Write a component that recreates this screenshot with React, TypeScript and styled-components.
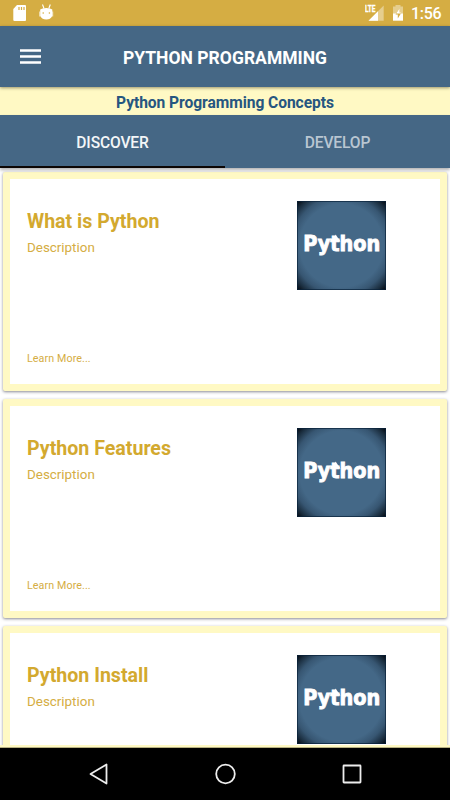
import React from 'react';
import styled, { createGlobalStyle } from 'styled-components';

const blue = '#456785';
const gold = '#d5ad43';
const cream = '#fff9c4';

const GlobalStyle = createGlobalStyle`
  * { box-sizing: border-box; }
  body { margin: 0; background: #fff; font-family: Roboto, sans-serif; }
`;

const Screen = styled.div`
  width: 450px;
  height: 800px;
  display: flex;
  flex-direction: column;
  overflow: hidden;
  background: #fff;
`;

const StatusBar = styled.div`
  flex: none;
  height: 26px;
  display: flex;
  justify-content: space-between;
  background: ${gold};
`;

const StatusIcons = styled.svg`
  display: block;
  height: 26px;
`;

const StatusRight = styled.div`
  display: flex;
`;

const Clock = styled.span`
  width: 39px;
  font-size: 16px;
  font-weight: 500;
  line-height: 28px;
  letter-spacing: -0.3px;
  color: #fff;
`;

const AppBar = styled.header`
  flex: none;
  position: relative;
  z-index: 1;
  height: 61px;
  display: grid;
  grid-template-columns: 60px 1fr 60px;
  align-items: center;
  background: ${blue};
  box-shadow: 0 1px 3px rgba(60, 50, 20, 0.5);
`;

const MenuButton = styled.button`
  border: 0;
  padding: 0 0 0 20px;
  background: none;
  svg { display: block; }
`;

const Title = styled.h1`
  margin: 2px 0 0;
  text-align: center;
  color: #fff;
  font-size: 17.5px;
  font-weight: 700;
  line-height: 24px;
  letter-spacing: 0.02px;
  white-space: nowrap;
`;

const Banner = styled.div`
  flex: none;
  height: 28px;
  padding-top: 1px;
  background: ${cream};
  color: #265680;
  font-size: 15.6px;
  font-weight: 700;
  line-height: 30px;
  letter-spacing: -0.06px;
  text-align: center;
`;

const Tabs = styled.nav`
  flex: none;
  position: relative;
  z-index: 1;
  height: 53px;
  display: grid;
  grid-template-columns: 1fr 1fr;
  background: ${blue};
  box-shadow: 0 2px 3px rgba(0, 0, 0, 0.3);
`;

const Tab = styled.button<{ $active?: boolean }>`
  border: 0;
  border-bottom: 2px solid ${p => (p.$active ? '#0c0604' : 'transparent')};
  padding: 5px 0 0;
  background: none;
  color: ${p => (p.$active ? '#f3f6f8' : '#b9c6d2')};
  font-family: inherit;
  font-size: 15.6px;
  font-weight: 500;
  letter-spacing: -0.15px;
`;

const List = styled.main`
  flex: 1;
  min-height: 0;
  overflow: hidden;
  display: flex;
  flex-direction: column;
  gap: 8px;
  padding: 4px 3px 0;
`;

const Card = styled.article`
  flex: none;
  height: 219px;
  display: flex;
  justify-content: space-between;
  border: 7px solid ${cream};
  border-radius: 2px;
  background: #fff;
  box-shadow: 0 1px 3px rgba(40, 40, 60, 0.55);
`;

const CardText = styled.div`
  display: flex;
  flex-direction: column;
  padding: 29px 0 17px 17px;
  color: ${gold};
`;

const CardTitle = styled.h2`
  margin: 0;
  color: #d3a92f;
  font-size: 19.6px;
  font-weight: 700;
  line-height: 28px;
`;

const Description = styled.p`
  margin: 2px 0 0;
  font-size: 13.4px;
  line-height: 20px;
`;

const LearnMore = styled.a`
  margin-top: auto;
  font-size: 10.7px;
  line-height: 16px;
  letter-spacing: 0.1px;
`;

const Logo = styled.svg`
  display: block;
  width: 89px;
  height: 89px;
  margin: 22px 54px 0 0;
`;

const BottomEdge = styled.div`
  flex: none;
  height: 3px;
  background: ${cream};
  border-bottom: 1px solid #b7b083;
`;

const NavBar = styled.footer`
  flex: none;
  height: 52px;
  display: flex;
  justify-content: center;
  background: #000;
`;

const NavIcon = styled.svg`
  display: block;
  width: 127px;
  height: 52px;
  fill: none;
  stroke: #ededed;
  stroke-width: 1.8;
  stroke-linejoin: round;
`;

function PythonLogo({ id }: { id: string }) {
  return (
    <Logo viewBox="0 0 89 89">
      <defs>
        <radialGradient id={id} cx="50%" cy="50%" r="71%">
          <stop offset="0.66" stopColor="#446887" />
          <stop offset="0.78" stopColor="#375672" />
          <stop offset="0.9" stopColor="#1a2d3e" />
          <stop offset="1" stopColor="#000208" />
        </radialGradient>
      </defs>
      <rect width="89" height="89" fill={`url(#${id})`} />
      <rect x="0.5" y="0.5" width="88" height="88" fill="none" stroke="#08223a" strokeOpacity="0.7" />
      <text
        x="6.200"
        y="50"
        textLength="77"
        lengthAdjust="spacingAndGlyphs"
        fontFamily="DejaVu Sans, sans-serif"
        fontWeight="700"
        fontSize="20.500"
        fill="#fff"
        stroke="#fff"
        strokeWidth="0.900"
        strokeLinejoin="miter"
      >
        Python
      </text>
      <path d="M37.500 37.500l1-4 5 7h-6z" fill="#fff" />
    </Logo>
  );
}

const topics = ['What is Python', 'Python Features', 'Python Install'];

export default function App() {
  return (
    <>
      <GlobalStyle />
      <Screen>
        <StatusBar>
          <StatusIcons width="60" viewBox="0 0 60 26" fill="#fff">
            <path d="M17 5h8q1 0 1 1v14q0 1-1 1H14.500q-1.200 0-1.200-1V9z" />
            <path d="M19 7v3M21.500 7v3M24 7v3" stroke={gold} strokeWidth="1.200" />
            <path d="M42.500 4.500l1.500 4M50.300 4.500l-1.500 4" stroke="#fff" strokeWidth="1.100" />
            <path d="M40.200 9.500Q42 8 46.300 8t6 1.500v6.500Q50.500 19.500 46.300 19.500T40.200 16z" />
            <path d="M39.700 11.500v5M52.700 11.500v5" stroke="#fff" strokeOpacity="0.7" />
            <circle cx="43.200" cy="13" r="0.800" fill={gold} />
            <circle cx="49.400" cy="13" r="0.800" fill={gold} />
          </StatusIcons>
          <StatusRight>
            <StatusIcons width="46" viewBox="365 0 46 26">
              <path d="M383.700 5.500V20.700H368.500z" fill="#fff" fillOpacity="0.4" />
              <path d="M378 11.200V20.700H368.500z" fill="#fff" />
              <path d="M364 4h12v8h-12z" fill={gold} />
              <text x="365" y="12" fontFamily="Roboto" fontSize="8.800" fontWeight="700" fill="#fff" stroke="#fff" strokeWidth="0.350" textLength="10.500" lengthAdjust="spacingAndGlyphs">LTE</text>
              <path d="M393 6.500h2.500V5h5v1.500h2.500V14h-10z" fill="#fff" fillOpacity="0.4" />
              <path d="M393 13.500h10V20.700h-10z" fill="#fff" />
              <path d="M399.500 8.500l-4 6h2.300v4l3.700-6h-2z" fill={gold} />
              <path d="M399.500 8.500l-3.300 5h4.500l.8-1h-2z" fill="#fff" />
            </StatusIcons>
            <Clock>1:56</Clock>
          </StatusRight>
        </StatusBar>
        <AppBar>
          <MenuButton aria-label="Menu">
            <svg width="21" height="16" viewBox="0 0 21 16">
              <path d="M0 1.500h21M0 7.500h21M0 13.500h21" stroke="#fff" strokeWidth="2.300" />
            </svg>
          </MenuButton>
          <Title>PYTHON PROGRAMMING</Title>
        </AppBar>
        <Banner>Python Programming Concepts</Banner>
        <Tabs>
          <Tab $active>DISCOVER</Tab>
          <Tab>DEVELOP</Tab>
        </Tabs>
        <List>
          {topics.map((topic, i) => (
            <Card key={topic}>
              <CardText>
                <CardTitle>{topic}</CardTitle>
                <Description>Description</Description>
                {i < 2 && <LearnMore>Learn More...</LearnMore>}
              </CardText>
              <PythonLogo id={`vignette${i}`} />
            </Card>
          ))}
        </List>
        <BottomEdge />
        <NavBar>
          <NavIcon viewBox="0 0 127 52">
            <path d="M71.500 16.500v19L55.500 26z" />
          </NavIcon>
          <NavIcon viewBox="0 0 127 52">
            <circle cx="63.500" cy="26" r="9.300" />
          </NavIcon>
          <NavIcon viewBox="0 0 127 52">
            <rect x="54.500" y="17.500" width="17" height="17" rx="0.500" />
          </NavIcon>
        </NavBar>
      </Screen>
    </>
  );
}
